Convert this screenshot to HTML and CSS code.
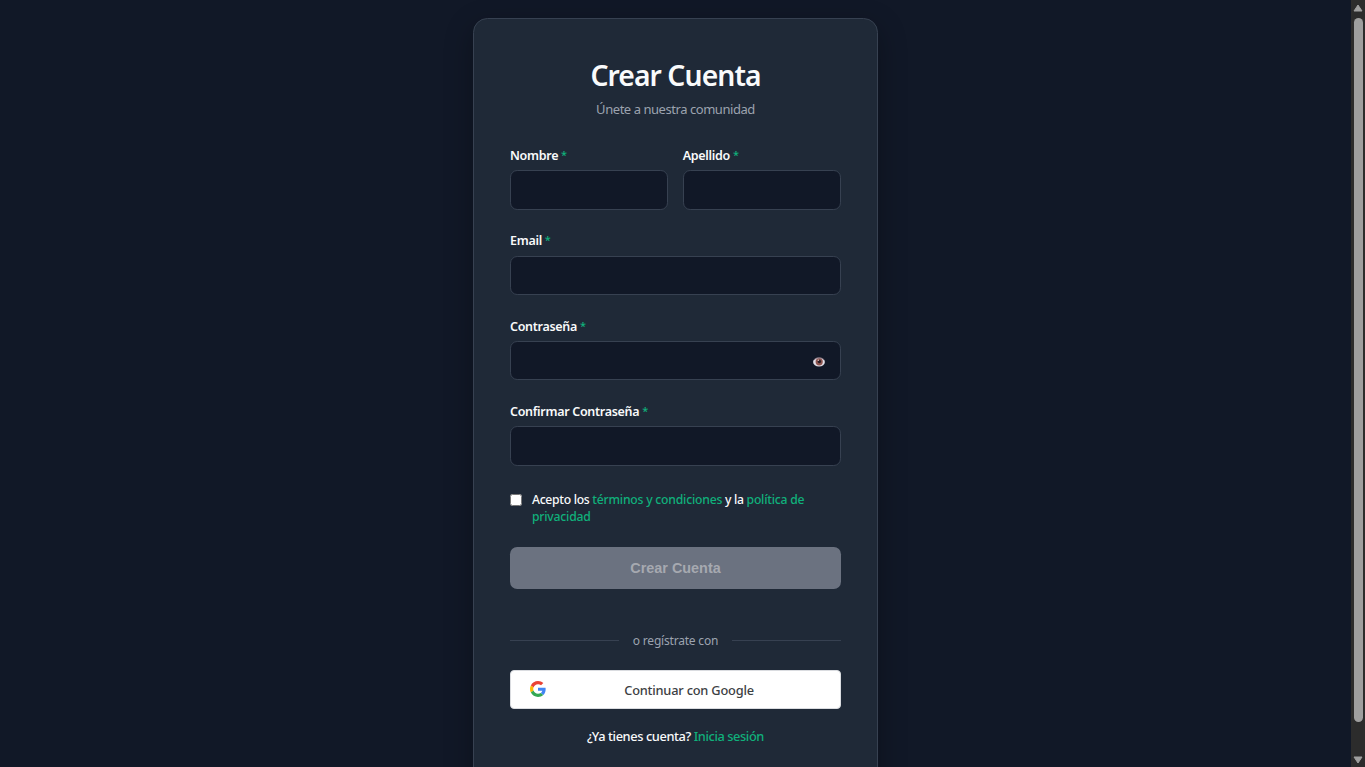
FILE: index.html
```
<!DOCTYPE html>
<html lang="es">
<head>
<meta charset="utf-8">
<title>Crear Cuenta</title>
<link rel="stylesheet" href="styles.css">
</head>
<body>
<div class="window">
  <main class="page">
    <section class="card">
      <h1 class="title">Crear Cuenta</h1>
      <p class="subtitle">Únete a nuestra comunidad</p>
      <form class="form">
        <div class="row">
          <div class="field">
            <label class="label" for="nombre">Nombre <span class="req">*</span></label>
            <input class="input" id="nombre" type="text">
          </div>
          <div class="field">
            <label class="label" for="apellido">Apellido <span class="req">*</span></label>
            <input class="input" id="apellido" type="text">
          </div>
        </div>
        <div class="field">
          <label class="label" for="email">Email <span class="req">*</span></label>
          <input class="input" id="email" type="email">
        </div>
        <div class="field">
          <label class="label" for="pass">Contraseña <span class="req">*</span></label>
          <div class="password">
            <input class="input" id="pass" type="password">
            <button class="toggle" type="button" aria-label="Mostrar contraseña">
              <svg class="eye" width="12" height="10" viewBox="0 0 12 10">
                <ellipse cx="6" cy="5" rx="5.9" ry="4.6" fill="#e2dfe8"/>
                <circle cx="6.2" cy="4.8" r="3.6" fill="#8d5550"/>
                <circle cx="6.4" cy="4.5" r="1.7" fill="#2b1d25"/>
                <circle cx="5.4" cy="3.3" r=".8" fill="#d9b9b6"/>
                <path d="M.9 3C2.8.2 9.3.2 11.2 3" fill="none" stroke="#5b3c4b" stroke-width=".6"/>
              </svg>
            </button>
          </div>
        </div>
        <div class="field">
          <label class="label" for="confirm">Confirmar Contraseña <span class="req">*</span></label>
          <input class="input" id="confirm" type="password">
        </div>
        <div class="terms">
          <input class="check" id="terms" type="checkbox">
          <label class="terms-text" for="terms">Acepto los <a class="link">términos y condiciones</a> y la <a class="link">política de<br>privacidad</a></label>
        </div>
        <button class="submit" type="button">Crear Cuenta</button>
      </form>
      <div class="divider"><span class="divider-text">o regístrate con</span></div>
      <button class="google" type="button">
        <svg class="google-logo" width="16" height="16" viewBox="0 0 48 48">
          <path fill="#EA4335" d="M24 9.5c3.54 0 6.71 1.22 9.21 3.6l6.85-6.85C35.9 2.38 30.47 0 24 0 14.62 0 6.51 5.38 2.56 13.22l7.98 6.19C12.43 13.72 17.74 9.5 24 9.5z"/>
          <path fill="#4285F4" d="M46.98 24.55c0-1.57-.15-3.09-.38-4.55H24v9.02h12.94c-.58 2.96-2.26 5.48-4.78 7.18l7.73 6c4.51-4.18 7.09-10.36 7.09-17.65z"/>
          <path fill="#FBBC05" d="M10.53 28.59c-.48-1.45-.76-2.99-.76-4.59s.27-3.14.76-4.59l-7.98-6.19C.92 16.46 0 20.12 0 24c0 3.88.92 7.54 2.56 10.78l7.97-6.19z"/>
          <path fill="#34A853" d="M24 48c6.48 0 11.93-2.13 15.89-5.81l-7.73-6c-2.15 1.45-4.92 2.3-8.16 2.3-6.26 0-11.57-4.22-13.47-9.91l-7.98 6.19C6.51 42.62 14.62 48 24 48z"/>
        </svg>
        <span class="google-text">Continuar con Google</span>
      </button>
      <p class="login">¿Ya tienes cuenta? <a class="link">Inicia sesión</a></p>
    </section>
  </main>
  <div class="scrollbar">
    <svg width="10" height="8" viewBox="0 0 10 8"><path d="M5 1 9 7H1z" fill="#9f9f9f" stroke="#9f9f9f" stroke-linejoin="round"/></svg>
    <div class="thumb"></div>
    <svg width="10" height="8" viewBox="0 0 10 8"><path d="M5 7 9 1H1z" fill="#9f9f9f" stroke="#9f9f9f" stroke-linejoin="round"/></svg>
  </div>
</div>
</body>
</html>
```
FILE: styles.css
```
* { box-sizing: border-box; }
body {
  margin: 0;
  background: #111827;
  color: #f9fafb;
  font-family: "Noto Sans", "Open Sans", sans-serif;
  overflow: hidden;
}
.window { display: flex; height: 767px; overflow: hidden; }
.page {
  flex: 1;
  display: flex;
  justify-content: center;
  align-items: flex-start;
  padding-top: 18px;
  overflow: hidden;
}
.card {
  width: 405px;
  height: 800px;
  flex: none;
  padding: 36px;
  background: #1f2937;
  border: 1px solid #374151;
  border-radius: 14.4px;
  box-shadow: 0 9px 29px rgba(0, 0, 0, 0.3);
}
.title {
  margin: 0;
  padding-bottom: 2px;
  font-size: 28.3px;
  font-weight: 600;
  line-height: 40px;
  text-align: center;
  letter-spacing: -0.92px;
  white-space: nowrap;
}
.subtitle {
  margin: 0 0 27px;
  font-size: 13px;
  line-height: 24px;
  text-align: center;
  color: #9ca3af;
  letter-spacing: -0.45px;
}
.form { display: flex; flex-direction: column; gap: 23.7px; }
.row { display: grid; grid-template-columns: 1fr 1fr; gap: 14.4px; }
.field { display: flex; flex-direction: column; gap: 6.2px; min-width: 0; }
.label {
  font-size: 12.5px;
  font-weight: 600;
  line-height: 16px;
  height: 16px;
  letter-spacing: -0.3px;
  white-space: nowrap;
}
.req { color: #10b07b; font-size: 11px; font-weight: 500; vertical-align: 1px; line-height: 1; }
.input {
  width: 100%;
  height: 39.5px;
  display: block;
  background: #111827;
  border: 1px solid #374151;
  border-radius: 7.2px;
  outline: none;
  padding: 0 14px;
}
.password { position: relative; }
.toggle {
  position: absolute;
  right: 16px;
  top: 15.6px;
  padding: 0;
  border: 0;
  background: none;
  line-height: 0;
}
.terms { display: flex; align-items: flex-start; gap: 10px; height: 35px; margin-top: 1.5px; }
.check { width: 12px; height: 12px; margin: 3px 0 0; flex: none; }
.terms-text {
  font-size: 12.2px;
  font-weight: 500;
  line-height: 17.3px;
  letter-spacing: -0.3px;
  white-space: nowrap;
}
.link { color: #10b07b; font-weight: 500; }
.terms-text .link { letter-spacing: -0.22px; }
.submit {
  height: 42px;
  margin-top: -2.8px;
  border: 0;
  border-radius: 7.2px;
  background: #6b7280;
  color: #a6a9b0;
  font: bold 14.4px "Liberation Sans", sans-serif;
}
.divider {
  display: flex;
  align-items: center;
  gap: 14px;
  height: 20px;
  margin: 41.5px 0 19.5px;
}
.divider::before, .divider::after { content: ""; flex: 1; height: 1px; background: #374151; }
.divider-text { padding-top: 1px; font-size: 12px; line-height: 20px; color: #9ca3af; letter-spacing: -0.2px; }
.google {
  display: flex;
  align-items: center;
  width: 100%;
  height: 39px;
  padding: 0 19px;
  background: #fff;
  border: 1px solid #dadce0;
  border-radius: 4px;
}
.google-logo { flex: none; margin-bottom: 1px; }
.google-text {
  flex: 1;
  padding: 1px 0 0 11px;
  font: 500 12.8px/20px "Noto Sans", sans-serif;
  color: #3c4043;
  letter-spacing: -0.2px;
}
.login {
  margin: 17px 0 0;
  font-size: 12.8px;
  font-weight: 500;
  line-height: 20px;
  text-align: center;
  letter-spacing: -0.4px;
}
.scrollbar {
  width: 14px;
  flex: none;
  background: #2c2c2c;
  display: flex;
  flex-direction: column;
  align-items: center;
  padding: 4px 0 3px;
}
.thumb { width: 9px; height: 704px; margin: 6px 0 auto; border-radius: 5px; background: #9f9f9f; }
```
